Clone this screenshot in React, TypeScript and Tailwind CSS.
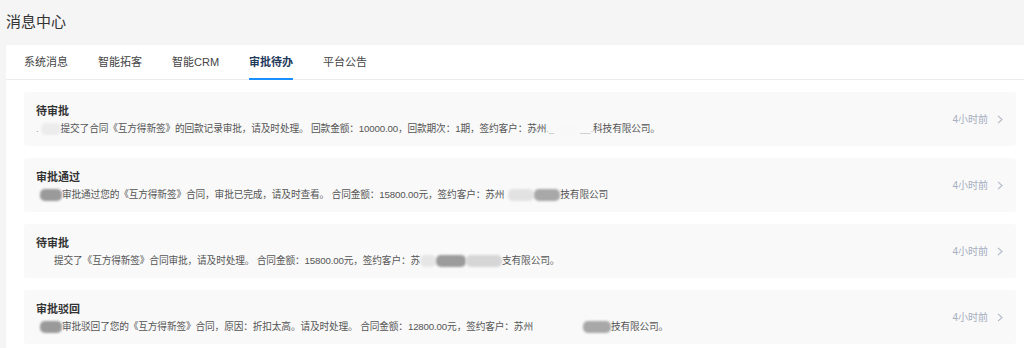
const tabs = ["系统消息", "智能拓客", "智能CRM", "审批待办", "平台公告"]

// blurred redaction patch
function Blot({ w, className }: { w: number; className: string }) {
  return (
    <span
      className={`inline-block h-[12px] align-middle rounded-[5px] blur-[1px] ${className}`}
      style={{ width: w }}
    />
  )
}

interface Item {
  title: string
  body: React.ReactNode
}

const items: Item[] = [
  {
    title: "待审批",
    body: (
      <>
        <span className="text-[#999]">.</span>
        <Blot w={20} className="bg-[#ececec] ml-[2px]" />
        提交了合同《互方得新签》的回款记录审批，请及时处理。 回款金额：10000.00，回款期次：1期，签约客户：苏州
        <span className="text-[#bbb]">._</span>
        <Blot w={26} className="bg-[#f8f8f8]" />
        <span className="text-[#bbb]">__.</span>
        科技有限公司。
      </>
    ),
  },
  {
    title: "审批通过",
    body: (
      <>
        <Blot w={22} className="bg-[#9a9a9a] ml-[4px]" />
        审批通过您的《互方得新签》合同，审批已完成，请及时查看。 合同金额：15800.00元，签约客户：苏州
        <Blot w={26} className="bg-[#e2e2e2] ml-[4px]" />
        <Blot w={26} className="bg-[#a8a8a8]" />
        技有限公司
      </>
    ),
  },
  {
    title: "待审批",
    body: (
      <>
        <span className="inline-block w-[18px]" />
        提交了《互方得新签》合同审批，请及时处理。 合同金额：15800.00元，签约客户：苏
        <Blot w={16} className="bg-[#e6e6e6] h-[4px]" />
        <Blot w={30} className="bg-[#9c9c9c] h-[4px]" />
        <Blot w={36} className="bg-[#d6d6d6] h-[4px]" />
        支有限公司。
      </>
    ),
  },
  {
    title: "审批驳回",
    body: (
      <>
        <Blot w={22} className="bg-[#9a9a9a] ml-[4px]" />
        审批驳回了您的《互方得新签》合同，原因：折扣太高。请及时处理。 合同金额：12800.00元，签约客户：苏州
        <span className="inline-block w-[50px]" />
        <Blot w={28} className="bg-[#a8a8a8]" />
        技有限公司。
      </>
    ),
  },
]

export default function App() {
  return (
    <div
      className="min-h-[348px] bg-[#f5f5f5] pl-[6px]"
      style={{ fontFamily: '"Liberation Sans", "Noto Sans CJK SC", sans-serif' }}
    >
      {/* Header */}
      <div className="flex h-[45px] items-center">
        <h1 className="text-[15px] leading-none text-[#333] -mt-[3px]">消息中心</h1>
      </div>

      <div className="bg-white">
        {/* Tabs */}
        <div className="flex h-[35px] gap-[30px] border-b border-[#ececec] px-[18px]">
          {tabs.map((t) => (
            <div
              key={t}
              className={`relative flex items-center text-[11px] ${
                t === "审批待办" ? "font-semibold text-[#1f3b5c]" : "text-[#444]"
              }`}
            >
              {t}
              {t === "审批待办" && (
                <span className="absolute -bottom-[1px] left-0 right-0 h-[2px] bg-[#1890ff]" />
              )}
            </div>
          ))}
        </div>

        {/* List */}
        <div className="flex flex-col gap-3 pl-[18px] pr-[8px] pt-3 pb-2">
          {items.map((it, i) => (
            <div
              key={i}
              className="flex h-[54px] items-center justify-between rounded-[3px] bg-[#f9f9f9] pl-3 pr-[13px]"
            >
              <div className="flex flex-col gap-[3px] pt-[1px]">
                <div className="text-[11px] font-semibold leading-[16px] text-[#333]">{it.title}</div>
                <div className="text-[9.7px] tracking-[-0.15px] leading-[14px] text-[#555] whitespace-nowrap">
                  {it.body}
                </div>
              </div>
              <div className="flex items-center gap-[9px] text-[10px] text-[#a6aec0]">
                <span>4小时前</span>
                <svg width="6" height="9" viewBox="0 0 6 9" fill="none">
                  <path d="M1 0.8 L5 4.5 L1 8.2" stroke="#b3b9c6" strokeWidth="1.1" />
                </svg>
              </div>
            </div>
          ))}
        </div>
      </div>
    </div>
  )
}
